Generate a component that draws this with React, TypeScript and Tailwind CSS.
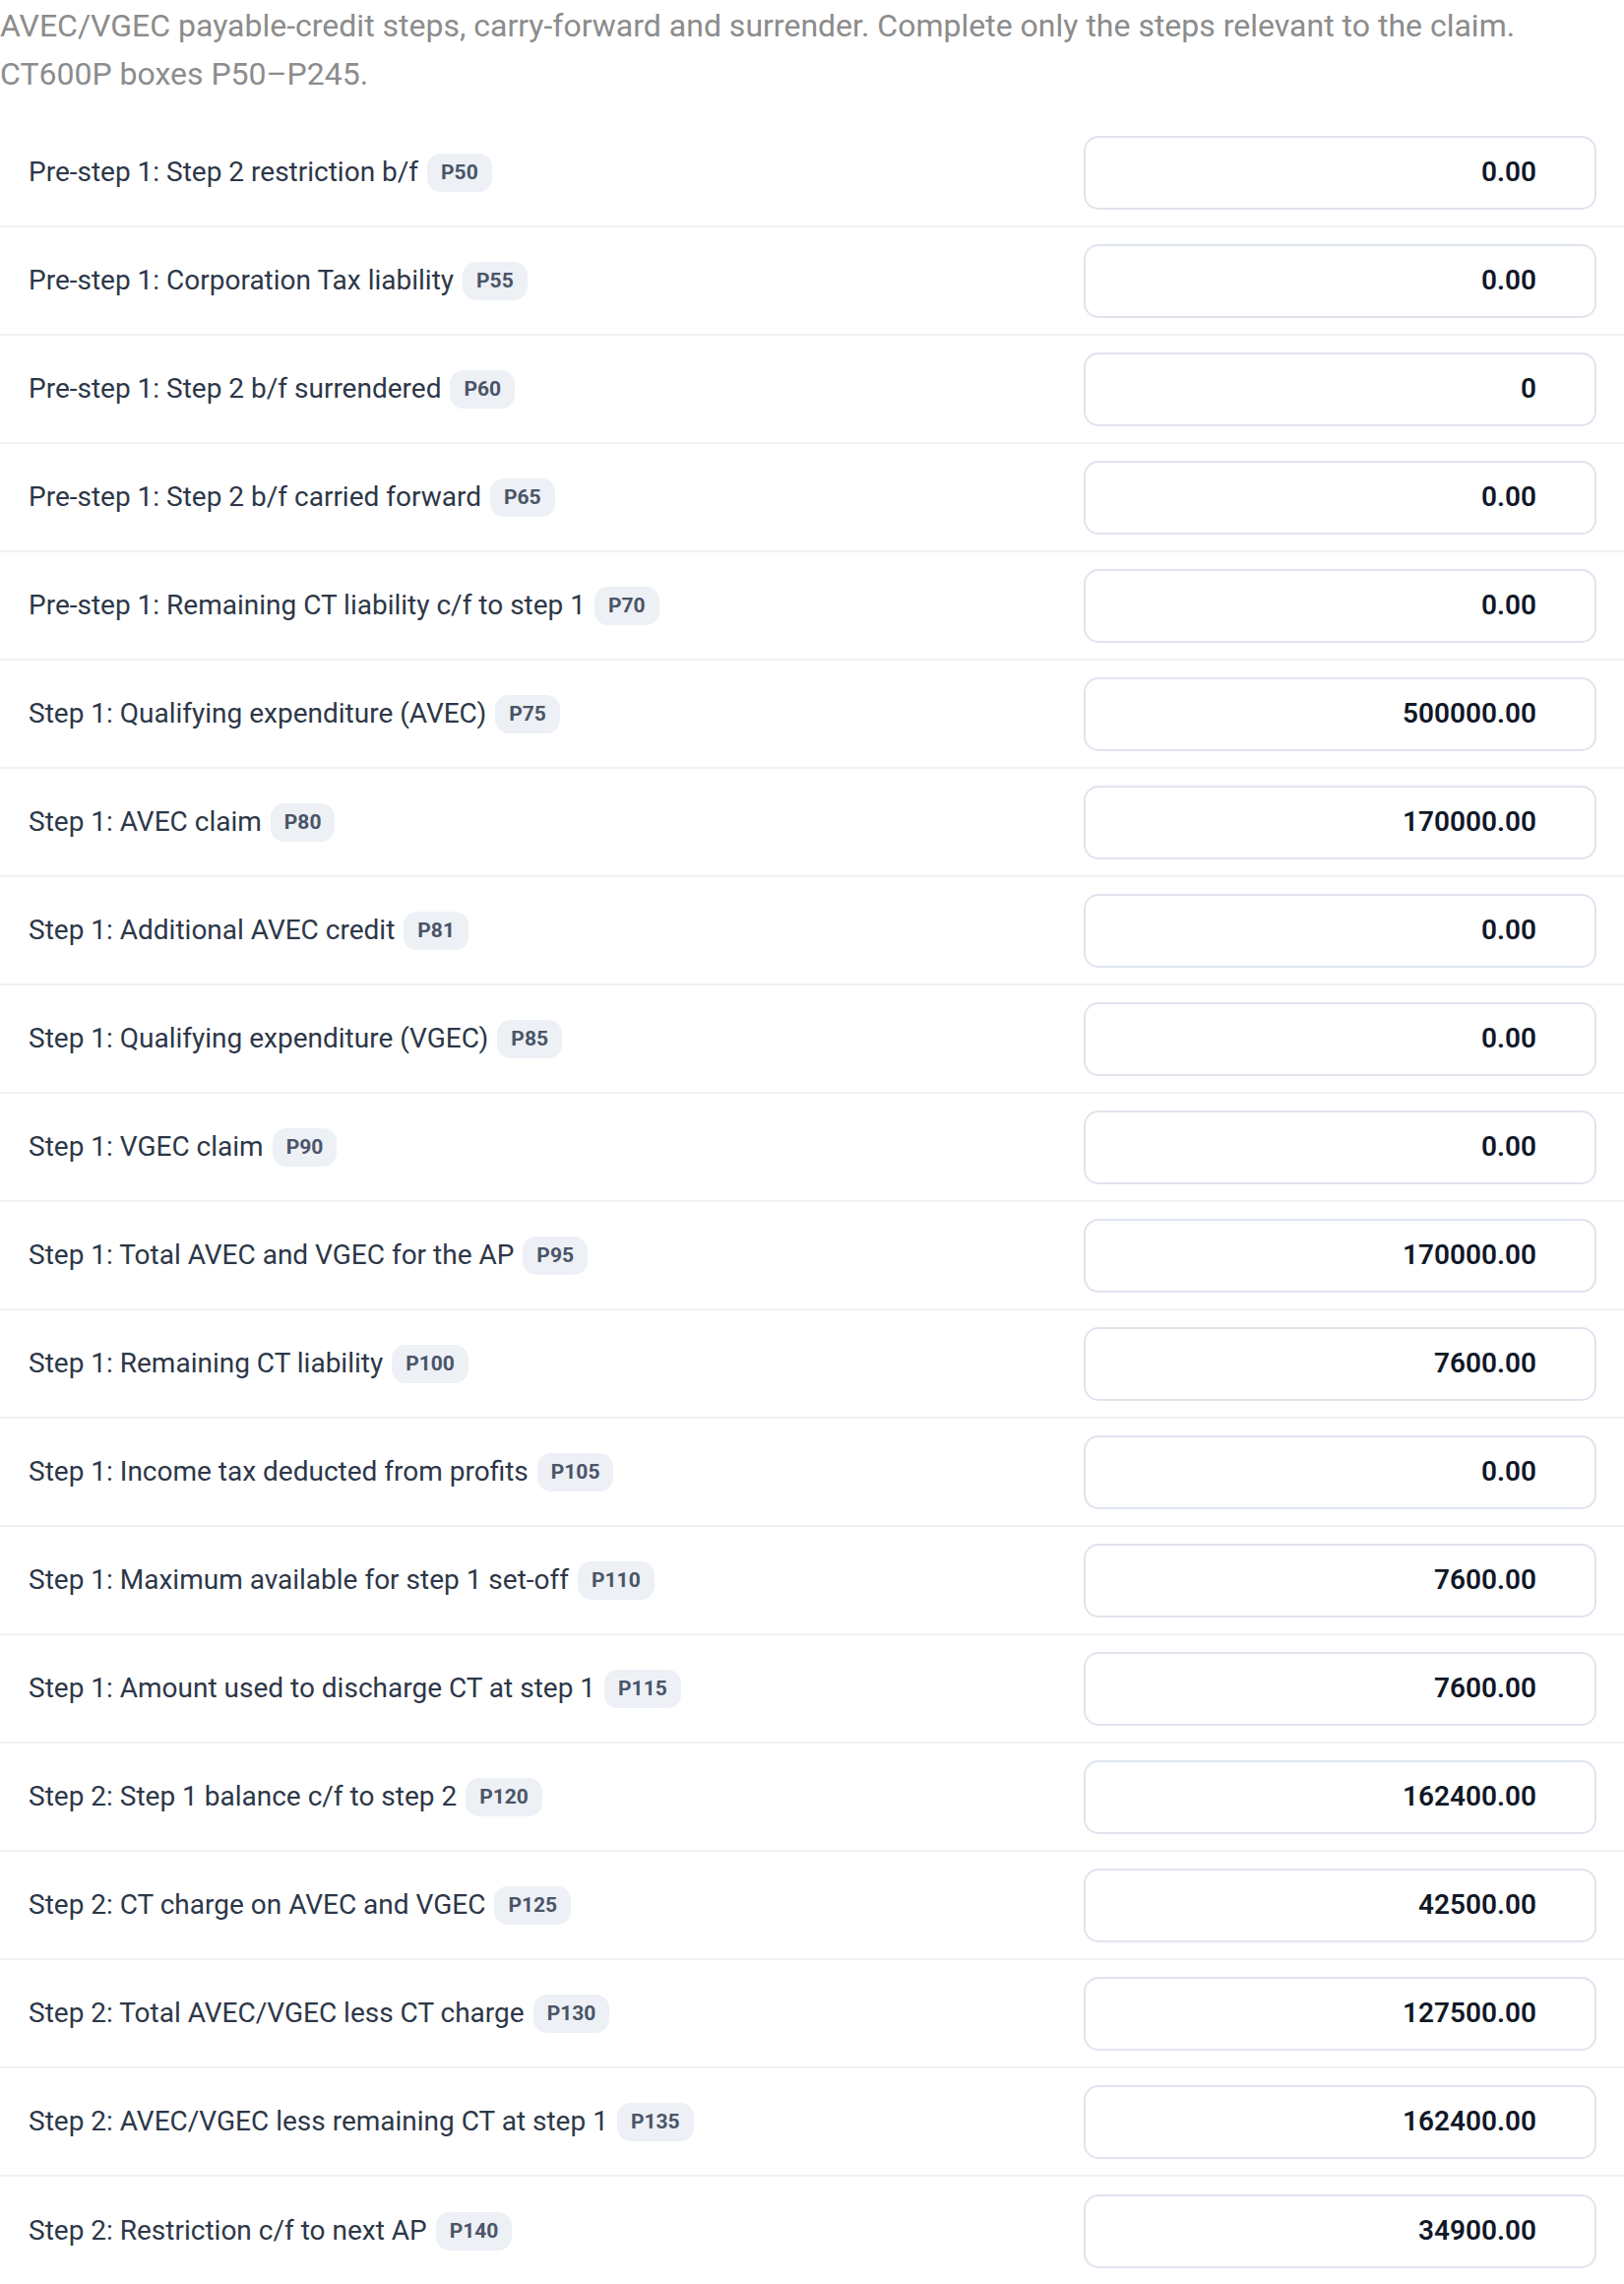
import React from "react";

interface Row {
  label: string;
  box: string;
  value: string;
}

const rows: Row[] = [
  { label: "Pre-step 1: Step 2 restriction b/f", box: "P50", value: "0.00" },
  { label: "Pre-step 1: Corporation Tax liability", box: "P55", value: "0.00" },
  { label: "Pre-step 1: Step 2 b/f surrendered", box: "P60", value: "0" },
  { label: "Pre-step 1: Step 2 b/f carried forward", box: "P65", value: "0.00" },
  { label: "Pre-step 1: Remaining CT liability c/f to step 1", box: "P70", value: "0.00" },
  { label: "Step 1: Qualifying expenditure (AVEC)", box: "P75", value: "500000.00" },
  { label: "Step 1: AVEC claim", box: "P80", value: "170000.00" },
  { label: "Step 1: Additional AVEC credit", box: "P81", value: "0.00" },
  { label: "Step 1: Qualifying expenditure (VGEC)", box: "P85", value: "0.00" },
  { label: "Step 1: VGEC claim", box: "P90", value: "0.00" },
  { label: "Step 1: Total AVEC and VGEC for the AP", box: "P95", value: "170000.00" },
  { label: "Step 1: Remaining CT liability", box: "P100", value: "7600.00" },
  { label: "Step 1: Income tax deducted from profits", box: "P105", value: "0.00" },
  { label: "Step 1: Maximum available for step 1 set-off", box: "P110", value: "7600.00" },
  { label: "Step 1: Amount used to discharge CT at step 1", box: "P115", value: "7600.00" },
  { label: "Step 2: Step 1 balance c/f to step 2", box: "P120", value: "162400.00" },
  { label: "Step 2: CT charge on AVEC and VGEC", box: "P125", value: "42500.00" },
  { label: "Step 2: Total AVEC/VGEC less CT charge", box: "P130", value: "127500.00" },
  { label: "Step 2: AVEC/VGEC less remaining CT at step 1", box: "P135", value: "162400.00" },
  { label: "Step 2: Restriction c/f to next AP", box: "P140", value: "34900.00" },
];

const App = () => {
  return (
    <div className="min-h-screen bg-white font-['Roboto',sans-serif]">
      <p className="text-[32px] leading-[49px] text-[#8c8c8c] pt-[2px]">
        AVEC/VGEC payable-credit steps, carry-forward and surrender. Complete
        only the steps relevant to the claim. CT600P boxes P50–P245.
      </p>
      <div className="mt-[21px]">
        {rows.map((row, i) => (
          <div
            key={row.box}
            className={`flex items-center justify-between pl-[29px] pr-[28px] h-[110px] ${
              i < rows.length - 1 ? "border-b-2 border-[#eef1f5]" : ""
            }`}
          >
            <div className="flex items-center gap-[9px]">
              <span className="text-[28px] text-[#2d3748]">{row.label}</span>
              <span className="rounded-[14px] bg-[#edf0f5] px-[14px] py-[6px] text-[21px] font-bold leading-[27px] text-[#4a5568]">
                {row.box}
              </span>
            </div>
            <div className="flex h-[75px] w-[521px] items-center justify-end rounded-[15px] border-2 border-[#dfe4ee] pr-[59px]">
              <span className="text-[28px] font-semibold text-[#111827]">
                {row.value}
              </span>
            </div>
          </div>
        ))}
      </div>
    </div>
  );
};

export default App;
